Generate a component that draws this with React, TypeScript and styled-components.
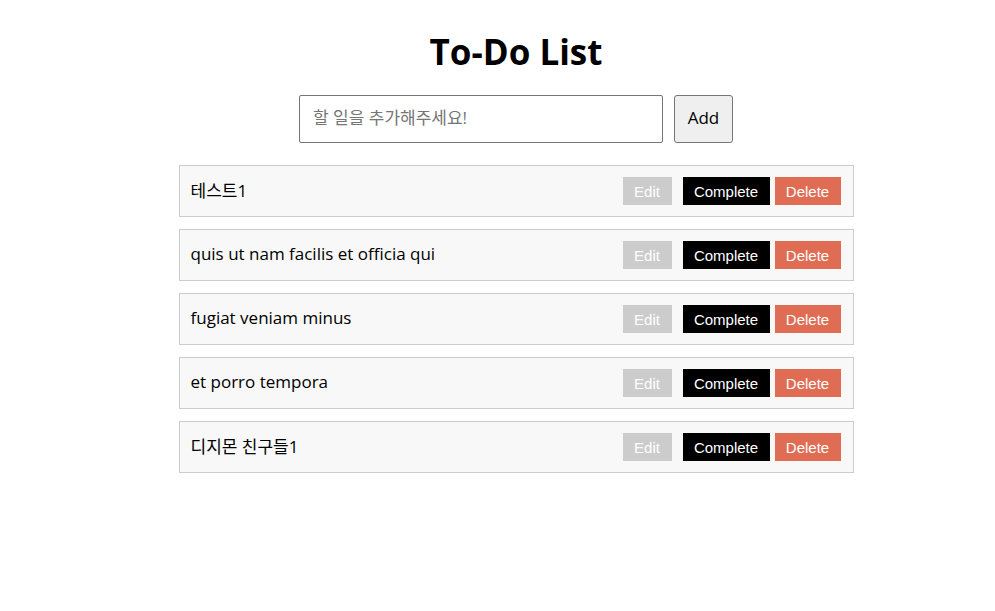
import React, { useState } from "react";
import styled, { createGlobalStyle } from "styled-components";

const GlobalStyle = createGlobalStyle`
  html, body { margin: 0; padding: 0; background: #fff; }
  body { font-family: "Open Sans", "Noto Sans CJK KR", sans-serif; color: #000; }
  * { box-sizing: border-box; }
`;

const Page = styled.div`
  width: 674px;
  margin-left: 179px;
  padding-top: 28px;
  display: flex;
  flex-direction: column;
  align-items: center;
`;

const Title = styled.h1`
  margin: 0;
  font-size: 35px;
  font-weight: 700;
  line-height: 48px;
  height: 48px;
`;

const Form = styled.form`
  display: flex;
  gap: 11px;
  margin-top: 19px;
`;

const Input = styled.input`
  width: 364px;
  height: 48px;
  border: 1px solid #767676;
  border-radius: 2px;
  padding: 0 13px 3px;
  font-family: "Open Sans", "Noto Sans CJK KR", sans-serif;
  font-size: 17px;
  outline: none;
  &::placeholder { color: #757575; }
`;

const AddButton = styled.button`
  width: 59px;
  height: 48px;
  border: 1px solid #767676;
  border-radius: 3px;
  background: #efefef;
  font-family: "Open Sans", sans-serif;
  font-size: 17px;
  color: #000;
  padding: 0 0 3px;
`;

const List = styled.ul`
  list-style: none;
  margin: 22px 0 0;
  padding: 0;
  width: 675px;
  display: flex;
  flex-direction: column;
  gap: 12px;
`;

const Row = styled.li`
  display: flex;
  align-items: center;
  height: 52px;
  padding: 0 12px 0 11px;
  background: #f8f8f8;
  border: 1px solid #cccccc;
`;

const Label = styled.span`
  flex: 1;
  font-size: 17px;
  margin-bottom: 4px;
  font-family: "Open Sans", "Noto Sans CJK KR", sans-serif;
`;

const ActionButton = styled.button<{ $kind: "edit" | "complete" | "delete" }>`
  height: 28px;
  border: none;
  padding: 0;
  font-family: "Liberation Sans", Arial, sans-serif;
  font-size: 15px;
  color: #fff;
  width: ${(p) => (p.$kind === "edit" ? "49px" : p.$kind === "complete" ? "87px" : "66px")};
  margin-left: ${(p) => (p.$kind === "complete" ? "11px" : p.$kind === "delete" ? "5px" : "0")};
  background: ${(p) =>
    p.$kind === "edit" ? "#cccccc" : p.$kind === "complete" ? "#000000" : "#e16c54"};
`;

const todos = [
  "테스트1",
  "quis ut nam facilis et officia qui",
  "fugiat veniam minus",
  "et porro tempora",
  "디지몬 친구들1",
];

export default function App() {
  const [value, setValue] = useState("");
  return (
    <>
      <GlobalStyle />
      <Page>
        <Title>To-Do List</Title>
        <Form onSubmit={(e) => e.preventDefault()}>
          <Input
            placeholder="할 일을 추가해주세요!"
            value={value}
            onChange={(e) => setValue(e.target.value)}
          />
          <AddButton type="submit">Add</AddButton>
        </Form>
        <List>
          {todos.map((t) => (
            <Row key={t}>
              <Label>{t}</Label>
              <ActionButton $kind="edit">Edit</ActionButton>
              <ActionButton $kind="complete">Complete</ActionButton>
              <ActionButton $kind="delete">Delete</ActionButton>
            </Row>
          ))}
        </List>
      </Page>
    </>
  );
}
